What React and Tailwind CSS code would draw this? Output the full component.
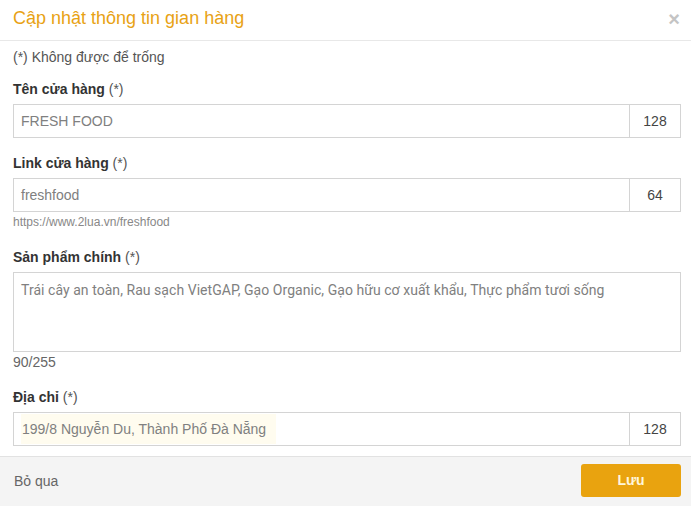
import React from 'react';

const Label = ({ children }) => (
  <div className="text-[14px] leading-[20px] text-[#333] mb-[5px]">
    <span className="font-bold">{children}</span> <span className="text-[#555]">(*)</span>
  </div>
);

const CountInput = ({ value, count, tint }) => (
  <div className="flex h-[34px] border border-[#d4d4d4]">
    <div className="flex-1 flex items-center pl-[7px] text-[14px] text-[#808080]">
      <span className={tint ? 'bg-[#fffcef] pl-[1px] pr-[10px] leading-[30px]' : ''}>{value}</span>
    </div>
    <div className="w-[51px] border-l border-[#d4d4d4] flex items-center justify-center text-[14px] text-[#444]">
      {count}
    </div>
  </div>
);

export default function App() {
  return (
    <div className="w-[691px] h-[506px] bg-white flex flex-col font-['Liberation_Sans',Arial,sans-serif]">
      {/* Header */}
      <div className="h-[41px] shrink-0 border-b border-[#e8e8e8] pl-[13px] pr-[11px] flex items-center justify-between">
        <h1 className="text-[18px] text-[#e8a214] -mt-[4px]">Cập nhật thông tin gian hàng</h1>
        <span className="text-[20px] font-bold text-[#c4c4c4] -mt-[2px]">×</span>
      </div>

      {/* Body */}
      <div className="flex-1 overflow-hidden pl-[13px] pr-[10px] pt-[6px]">
        <p className="text-[14px] leading-[20px] text-[#555] mb-[12px]">(*) Không được để trống</p>

        <div className="mb-[15px]">
          <Label>Tên cửa hàng</Label>
          <CountInput value="FRESH FOOD" count="128" />
        </div>

        <div className="mb-[17px]">
          <Label>Link cửa hàng</Label>
          <CountInput value="freshfood" count="64" />
          <p className="text-[12px] leading-[16px] text-[#888] mt-[2px]">https://www.2lua.vn/freshfood</p>
        </div>

        <div className="mb-[15px]">
          <Label>Sản phẩm chính</Label>
          <div className="h-[80px] border border-[#d4d4d4] px-[7px] pt-[7px] text-[14px] tracking-[0.05px] leading-[20px] text-[#808080] font-['Roboto',sans-serif]">
            Trái cây an toàn, Rau sạch VietGAP, Gạo Organic, Gạo hữu cơ xuất khẩu, Thực phẩm tươi sống
          </div>
          <p className="text-[14px] leading-[20px] text-[#666]">90/255</p>
        </div>

        <div>
          <Label>Địa chỉ</Label>
          <CountInput value="199/8 Nguyễn Du, Thành Phố Đà Nẵng" count="128" tint />
        </div>
      </div>

      {/* Footer */}
      <div className="h-[50px] shrink-0 border-t border-[#e2e2e2] bg-[#f4f4f4] pl-[13px] pr-[10px] flex items-center justify-between">
        <span className="text-[14px] text-[#666] ml-[1px]">Bỏ qua</span>
        <button className="w-[100px] h-[33px] rounded-[3px] bg-[#e9a30f] text-[14px] font-bold text-[#fff6dc] -mt-[3px]">
          Lưu
        </button>
      </div>
    </div>
  );
}
